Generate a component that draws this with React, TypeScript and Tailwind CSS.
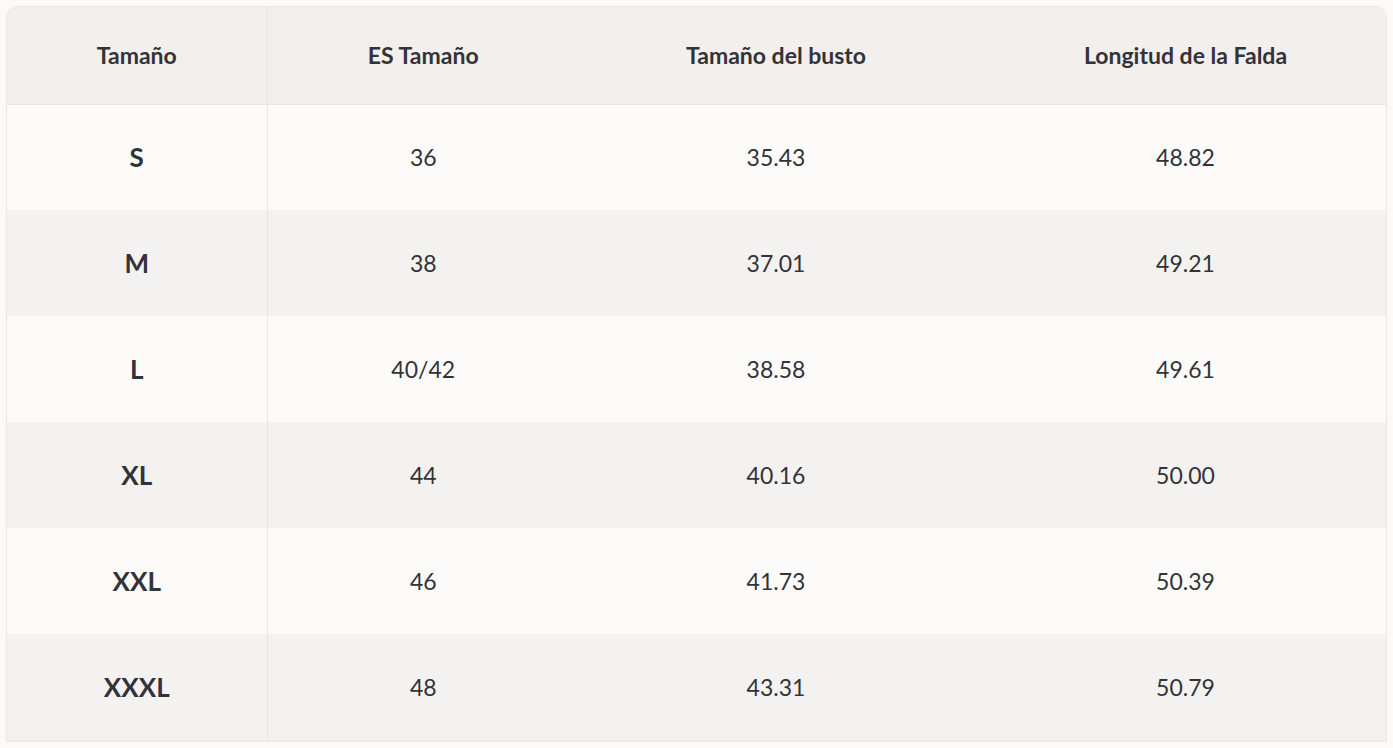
const rows = [
  ["S", "36", "35.43", "48.82"],
  ["M", "38", "37.01", "49.21"],
  ["L", "40/42", "38.58", "49.61"],
  ["XL", "44", "40.16", "50.00"],
  ["XXL", "46", "41.73", "50.39"],
  ["XXXL", "48", "43.31", "50.79"],
]

const headers = ["Tamaño", "ES Tamaño", "Tamaño del busto", "Longitud de la Falda"]

export default function App() {
  return (
    <div className="min-h-[748px] bg-[#fbfaf9] px-[6px] pt-[6px] font-['Lato','Liberation_Sans',sans-serif] text-[#323338]">
      <div className="overflow-hidden rounded-t-[12px] border border-b-0 border-[#ebe7e3]">
        <table className="w-full table-fixed border-collapse">
          <colgroup>
            <col className="w-[260px]" />
            <col className="w-[312px]" />
            <col className="w-[406px]" />
            <col />
          </colgroup>
          <thead>
            <tr className="h-[97px] bg-[#f2efec]">
              {headers.map((h, i) => (
                <th
                  key={h}
                  className={`border-b border-[#e9e5e1] text-center text-[23px] font-bold ${i === 0 ? "border-r" : ""} ${i === 2 ? "pr-[12px]" : ""}`}
                >
                  {h}
                </th>
              ))}
            </tr>
          </thead>
          <tbody>
            {rows.map((r, idx) => (
              <tr key={r[0]} className={`h-[106px] ${idx % 2 === 0 ? "bg-[#fcfbfa]" : "bg-[#f4f2f0]"}`}>
                <td className="border-r border-[#e9e5e1] text-center text-[26px] font-bold">{r[0]}</td>
                <td className="text-center text-[23px]">{r[1]}</td>
                <td className="pr-[12px] text-center text-[23px]">{r[2]}</td>
                <td className="text-center text-[23px]">{r[3]}</td>
              </tr>
            ))}
          </tbody>
        </table>
        <div className="h-[2px] bg-[#eeebe8]" />
      </div>
    </div>
  )
}
